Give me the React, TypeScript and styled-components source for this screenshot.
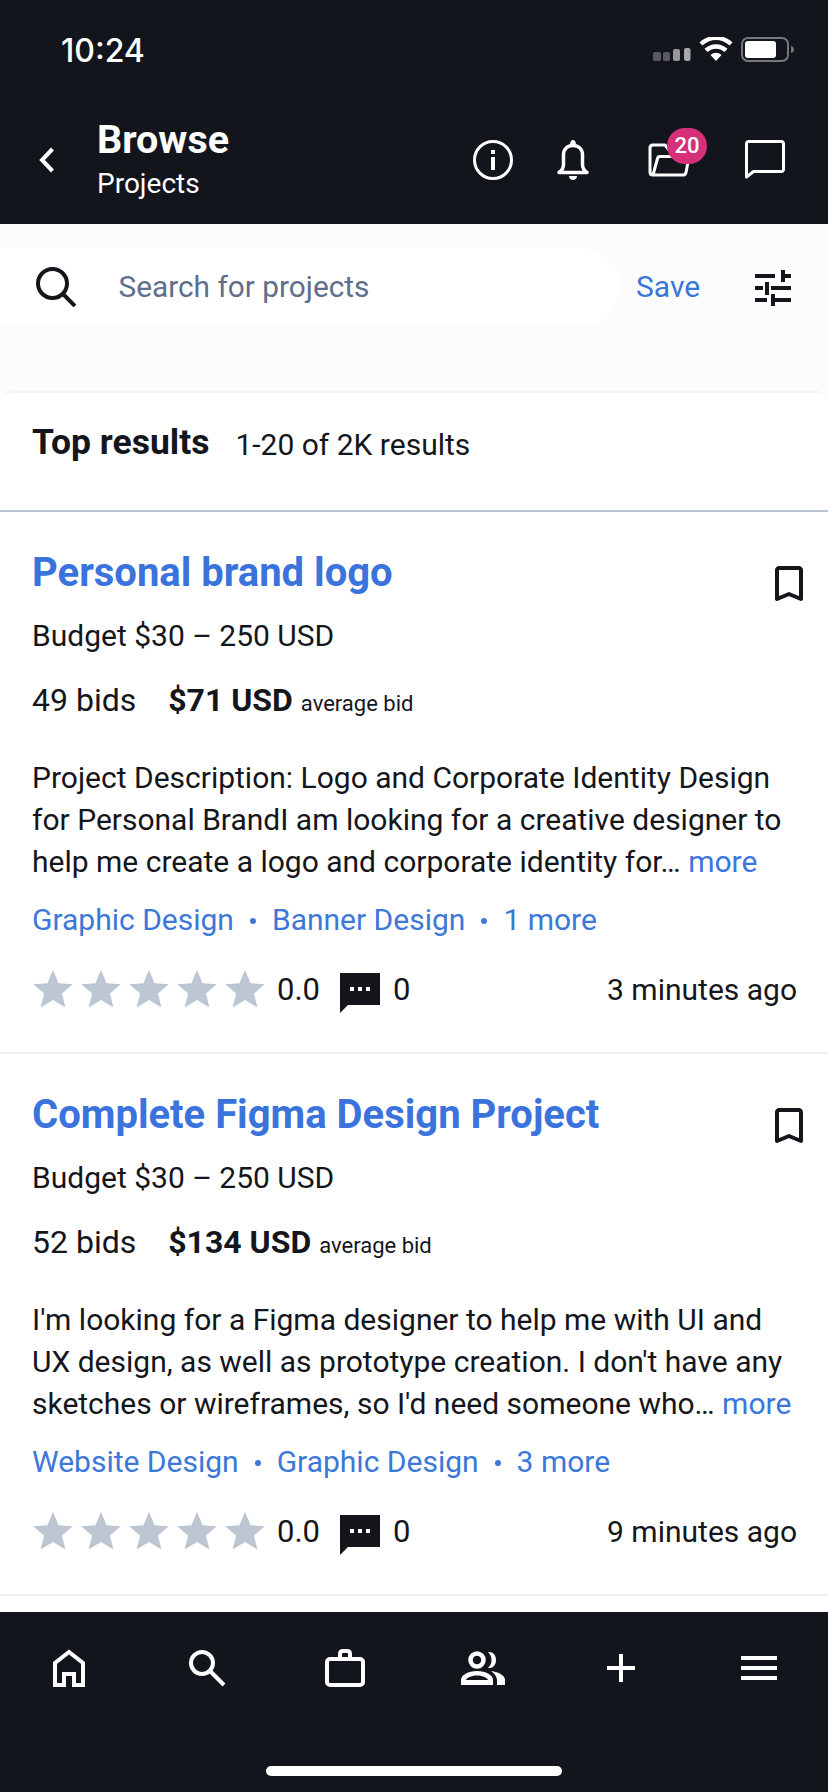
import React from "react";
import styled, { createGlobalStyle } from "styled-components";

const Global = createGlobalStyle`
  html, body { margin: 0; padding: 0; background: #fff; }
  * { box-sizing: border-box; }
  body { font-family: Roboto, "Liberation Sans", sans-serif; color: #14161c; }
`;

const Page = styled.div`
  width: 828px;
  height: 1792px;
  display: flex;
  flex-direction: column;
  overflow: hidden;
  background: #fff;
`;

const Header = styled.header`
  height: 224px;
  flex: none;
  background: #13151d;
  color: #fff;
  display: flex;
  flex-direction: column;
`;

const StatusBar = styled.div`
  height: 100px;
  flex: none;
  display: flex;
  align-items: flex-start;
  justify-content: space-between;
  padding: 32px 32px 0 61px;
`;

const Clock = styled.span`
  font-family: Inter, Roboto, sans-serif;
  font-size: 32px;
  line-height: 38px;
  font-weight: 500;
`;

const StatusIcons = styled.svg`
  display: block;
  width: 146px;
  height: 30px;
  margin-top: 5px;
`;

const NavRow = styled.div`
  display: flex;
  align-items: flex-start;
  padding-left: 38px;
`;

const Back = styled.svg`
  flex: none;
  width: 20px;
  height: 28px;
  margin-top: 46px;
`;

const Titles = styled.div`
  flex: 1;
  margin-left: 39px;
  display: flex;
  flex-direction: column;
`;

const Title = styled.div`
  font-size: 39.5px;
  line-height: 44px;
  font-weight: 700;
  margin-top: 18px;
`;

const Subtitle = styled.div`
  font-size: 28px;
  line-height: 32px;
  margin-top: 6px;
`;

const NavIcons = styled.div`
  display: flex;
  align-items: flex-start;
  padding: 40px 43px 0 0;
`;

const NavIcon = styled.div<{ $gap: number }>`
  position: relative;
  margin-left: ${(p) => p.$gap}px;
  height: 40px;
  svg { display: block; }
`;

const Badge = styled.span`
  position: absolute;
  left: 19px;
  top: -12px;
  width: 40px;
  height: 36px;
  border-radius: 18px;
  background: #d6307a;
  color: #fff;
  font-size: 22px;
  line-height: 36px;
  font-weight: 500;
  text-align: center;
`;

const SearchBar = styled.div`
  height: 167px;
  flex: none;
  background: #fcfcfd;
  padding-top: 24px;
  display: flex;
  align-items: flex-start;
`;

const SearchPill = styled.div`
  width: 620px;
  height: 77px;
  border-radius: 0 38px 38px 0;
  background: #fff;
  display: flex;
  align-items: center;
  padding-left: 36px;
`;

const SearchText = styled.span`
  font-size: 29.8px;
  color: #5e6f8d;
  margin-left: 42.5px;
`;

const SaveLink = styled.span`
  font-size: 30px;
  line-height: 77px;
  color: #3b76dc;
  margin-left: 16px;
`;

const FilterIcon = styled.svg`
  width: 36px;
  height: 36px;
  margin: 22px 0 0 55px;
`;

const Results = styled.main`
  flex: 1;
  min-height: 0;
  overflow: hidden;
  border-radius: 12px 12px 0 0;
  border-top: 2px solid #f3f4f6;
  background: #fff;
`;

const ResultsHead = styled.div`
  height: 119px;
  padding: 27px 32px 0;
  display: flex;
  align-items: flex-start;
  gap: 26px;
  border-bottom: 2px solid #b9c3d2;
`;

const HeadTitle = styled.h2`
  margin: 0;
  font-size: 35.5px;
  line-height: 44px;
  font-weight: 700;
`;

const HeadCount = styled.span`
  font-size: 30px;
  line-height: 44px;
  margin-top: 3px;
`;

const Item = styled.article`
  height: 542px;
  padding: 0 31px 0 32px;
  border-bottom: 2px solid #eff0f2;
`;

const ItemTop = styled.div`
  display: flex;
  justify-content: space-between;
  align-items: flex-start;
  height: 79px;
  padding-top: 38px;
`;

const ItemTitle = styled.h3`
  margin: 0;
  font-size: 40px;
  line-height: 46px;
  font-weight: 700;
  color: #3b73dc;
`;

const Bookmark = styled.svg`
  width: 28px;
  height: 36px;
  margin: 16px -6px 0 0;
`;

const Budget = styled.div`
  font-size: 30px;
  line-height: 40px;
  margin-top: 25px;
`;

const BidRow = styled.div`
  display: flex;
  align-items: baseline;
  font-size: 32px;
  line-height: 40px;
  margin-top: 24px;
`;

const Avg = styled.strong`
  margin-left: 32px;
  font-weight: 700;
  font-size: 32px;
`;

const AvgLabel = styled.span`
  margin-left: 8px;
  font-size: 22px;
`;

const Description = styled.p`
  margin: 33px 0 0;
  font-size: 30px;
  line-height: 42px;
  white-space: nowrap;
`;

const More = styled.span`
  color: #3b76dc;
`;

const Tags = styled.div`
  display: flex;
  align-items: center;
  margin-top: 17px;
  font-size: 30px;
  line-height: 40px;
  color: #3c78d8;
`;

const Dot = styled.i`
  width: 6px;
  height: 6px;
  border-radius: 50%;
  background: #3c78d8;
  margin: 2px 16px 0;
`;

const MetaRow = styled.div`
  display: flex;
  align-items: center;
  margin-top: 28px;
  height: 42px;
  font-size: 30px;
`;

const Stars = styled.div`
  display: flex;
  gap: 8px;
  margin-left: 1px;
  svg { display: block; }
`;

const Score = styled.span`
  margin-left: 12px;
  font-size: 31px;
`;

const Comment = styled.svg`
  width: 40px;
  height: 40px;
  margin: 8px 0 0 20px;
`;

const Count = styled.span`
  margin-left: 13px;
  font-size: 31px;
`;

const Ago = styled.span`
  margin-left: auto;
`;

const Tabs = styled.nav`
  height: 180px;
  flex: none;
  background: #13151d;
  display: flex;
  flex-direction: column;
`;

const TabRow = styled.div`
  display: grid;
  grid-template-columns: repeat(6, 138px);
  height: 154px;
`;

const Tab = styled.div`
  padding-top: 37px;
  display: flex;
  justify-content: center;
  svg { display: block; }
`;

const HomeBar = styled.div`
  width: 296px;
  height: 10px;
  border-radius: 5px;
  background: #fff;
  align-self: center;
`;

const StarIcon = () => (
  <svg width="40" height="40" viewBox="0 0 40 40">
    <path fill="#bcc6d2" d="M20 1l5.600 13.200 14.200 1.100-10.900 9.300 3.500 13.900L20 30.900 7.600 38.500l3.500-13.900L.2 15.300l14.200-1.100z" />
  </svg>
);

type Data = {
  title: string;
  bids: string;
  avg: string;
  lines: string[];
  last: string;
  tags: string[];
  ago: string;
};

const items: Data[] = [
  {
    title: "Personal brand logo",
    bids: "49 bids",
    avg: "$71 USD",
    lines: [
      "Project Description: Logo and Corporate Identity Design",
      "for Personal BrandI am looking for a creative designer to",
    ],
    last: "help me create a logo and corporate identity for… ",
    tags: ["Graphic Design", "Banner Design", "1 more"],
    ago: "3 minutes ago",
  },
  {
    title: "Complete Figma Design Project",
    bids: "52 bids",
    avg: "$134 USD",
    lines: [
      "I'm looking for a Figma designer to help me with UI and",
      "UX design, as well as prototype creation. I don't have any",
    ],
    last: "sketches or wireframes, so I'd need someone who… ",
    tags: ["Website Design", "Graphic Design", "3 more"],
    ago: "9 minutes ago",
  },
];

export default function App() {
  return (
    <Page>
      <Global />
      <Header>
        <StatusBar>
          <Clock>10:24</Clock>
          <StatusIcons viewBox="0 0 146 30">
            <rect x="3" y="15" width="8" height="9" rx="2" fill="#5a5b60" />
            <rect x="13" y="15" width="7" height="9" rx="2" fill="#5a5b60" />
            <rect x="23" y="12" width="7" height="12" rx="2" fill="#96979a" />
            <rect x="34" y="11" width="6.500" height="13" rx="2" fill="#a8a9ac" />
            <g transform="translate(3 0)">
              <path fill="#fff" d="M63 24l-5.500-6a8 8 0 0 1 11 0zM54.500 15l-3-3.200a16.500 16.500 0 0 1 23 0l-3 3.200a12.500 12.500 0 0 0-17 0zM49.500 8.500l-3-3a23.500 23.500 0 0 1 33 0l-3 3a19.500 19.500 0 0 0-27 0z" />
            </g>
            <rect x="92" y="1" width="46" height="23" rx="6" fill="none" stroke="#77787c" strokeWidth="2" />
            <rect x="95" y="4" width="31" height="17" rx="3" fill="#fff" />
            <path d="M141 9c2 .5 3 1.800 3 3.500s-1 3-3 3.500z" fill="#77787c" />
          </StatusIcons>
        </StatusBar>
        <NavRow>
          <Back viewBox="0 0 20 28">
            <path d="M14.500 3L4 14l10.500 11" fill="none" stroke="#fff" strokeWidth="4" />
          </Back>
          <Titles>
            <Title>Browse</Title>
            <Subtitle>Projects</Subtitle>
          </Titles>
          <NavIcons>
            <NavIcon $gap={0}>
              <svg width="40" height="40" viewBox="0 0 40 40">
                <circle cx="20" cy="20" r="18.500" fill="none" stroke="#fff" strokeWidth="3" />
                <rect x="18" y="10" width="4" height="4" fill="#fff" />
                <rect x="18" y="17" width="4" height="13" fill="#fff" />
              </svg>
            </NavIcon>
            <NavIcon $gap={44}>
              <svg width="32" height="40" viewBox="0 0 32 40">
                <path fill="none" stroke="#fff" strokeWidth="3.500" strokeLinejoin="round" d="M2 32.500c3-2 4.500-4 4.500-8V15c0-6 4-9.500 9.500-9.500S25.500 9 25.500 15v9.500c0 4 1.500 6 4.500 8z" />
                <path fill="#fff" d="M13 5c0-3 1-5 3-5s3 2 3 5zM12 36h8c0 2.500-2 4-4 4s-4-1.500-4-4z" />
              </svg>
            </NavIcon>
            <NavIcon $gap={59}>
              <svg width="43" height="40" viewBox="0 0 43 40">
                <path fill="none" stroke="#fff" strokeWidth="3" strokeLinejoin="round" d="M5 35c-2 0-3-1-3-3V8c0-2 1-3 3-3h12l4 5h14c2 0 3 1 3 3v3M5 35h30c1.500 0 2.500-.7 3-2.500l3-16H12c-1.500 0-2.200.7-2.500 2L5 35z" />
              </svg>
              <Badge>20</Badge>
            </NavIcon>
            <NavIcon $gap={54}>
              <svg width="40" height="40" viewBox="0 0 40 40">
                <path fill="none" stroke="#fff" strokeWidth="3" strokeLinejoin="round" d="M1.500 3.500c0-1 1-2 2-2h33c1 0 2 1 2 2v26c0 1-1 2-2 2H8.500l-7 5.500z" />
              </svg>
            </NavIcon>
          </NavIcons>
        </NavRow>
      </Header>
      <SearchBar>
        <SearchPill>
          <svg width="40" height="40" viewBox="0 0 40 40" style={{ flex: "none" }}>
            <circle cx="16.500" cy="16.500" r="14.500" fill="none" stroke="#14161c" strokeWidth="4" />
            <path d="M27 27l12 12" stroke="#14161c" strokeWidth="4" />
          </svg>
          <SearchText>Search for projects</SearchText>
        </SearchPill>
        <SaveLink>Save</SaveLink>
        <FilterIcon viewBox="0 0 36 36">
          <path fill="#14161c" d="M0 4h20v4H0zM28 4h8v4h-8zM26 0h4v12h-4zM0 16h8v4H0zM16 16h20v4H16zM10 12h4v13h-4zM0 28h12v4H0zM20 28h16v4H20zM16 24h4v12h-4z" />
        </FilterIcon>
      </SearchBar>
      <Results>
        <ResultsHead>
          <HeadTitle>Top results</HeadTitle>
          <HeadCount>1-20 of 2K results</HeadCount>
        </ResultsHead>
        {items.map((it) => (
          <Item key={it.title}>
            <ItemTop>
              <ItemTitle>{it.title}</ItemTitle>
              <Bookmark viewBox="0 0 28 36">
                <path fill="none" stroke="#14161c" strokeWidth="4" strokeLinejoin="round" d="M2 33V4c0-1 1-2 2-2h20c1 0 2 1 2 2v29l-12-5z" />
              </Bookmark>
            </ItemTop>
            <Budget>Budget $30 – 250 USD</Budget>
            <BidRow>
              {it.bids}
              <Avg>{it.avg}</Avg>
              <AvgLabel>average bid</AvgLabel>
            </BidRow>
            <Description>
              {it.lines[0]}
              <br />
              {it.lines[1]}
              <br />
              {it.last}
              <More>more</More>
            </Description>
            <Tags>
              {it.tags[0]}
              <Dot />
              {it.tags[1]}
              <Dot />
              {it.tags[2]}
            </Tags>
            <MetaRow>
              <Stars>
                {[0, 1, 2, 3, 4].map((i) => (
                  <StarIcon key={i} />
                ))}
              </Stars>
              <Score>0.0</Score>
              <Comment viewBox="0 0 40 40">
                <path fill="#14161c" d="M0 0h40v32H8l-8 8z" />
                <path fill="#fff" d="M10 14h4v4h-4zM18 14h4v4h-4zM26 14h4v4h-4z" />
              </Comment>
              <Count>0</Count>
              <Ago>{it.ago}</Ago>
            </MetaRow>
          </Item>
        ))}
      </Results>
      <Tabs>
        <TabRow>
          <Tab>
            <svg width="36" height="38" viewBox="0 0 36 38">
              <path fill="none" stroke="#fff" strokeWidth="4" d="M4 36V14L18 3l14 11v22h-9V25H13v11z" />
            </svg>
          </Tab>
          <Tab>
            <svg width="38" height="38" viewBox="0 0 38 38">
              <circle cx="14" cy="14" r="11" fill="none" stroke="#fff" strokeWidth="4" />
              <path d="M22 22l14 14" stroke="#fff" strokeWidth="4" />
            </svg>
          </Tab>
          <Tab>
            <svg width="40" height="38" viewBox="0 0 40 38">
              <rect x="2" y="10" width="36" height="26" rx="3" fill="none" stroke="#fff" strokeWidth="4" />
              <path d="M15 10V5c0-2 1-3 3-3h4c2 0 3 1 3 3v5" fill="none" stroke="#fff" strokeWidth="4" />
            </svg>
          </Tab>
          <Tab>
            <svg width="44" height="38" viewBox="0 0 44 38">
              <circle cx="16" cy="11" r="6.500" fill="none" stroke="#fff" strokeWidth="4.500" />
              <path fill="#fff" d="M27 3c5-.5 8 3 8 8s-3 8.500-8 8c2.500-2.500 3.500-5 3.500-8S29.500 5.500 27 3z" />
              <path fill="#fff" fillRule="evenodd" d="M0 36v-5c0-5 7-9 16-9s16 4 16 9v5zM5 31h22c-.5-2-5-4.500-11-4.500S5.500 29 5 31z" />
              <path fill="#fff" d="M30 22c8 1 14 4.500 14 9v5h-8v-5c0-3-2.500-6.500-6-9z" />
            </svg>
          </Tab>
          <Tab>
            <svg width="28" height="38" viewBox="0 0 28 38">
              <path d="M14 5v28M0 19h28" stroke="#fff" strokeWidth="4" />
            </svg>
          </Tab>
          <Tab>
            <svg width="36" height="38" viewBox="0 0 36 38">
              <path d="M0 9h36M0 19h36M0 29h36" stroke="#fff" strokeWidth="4" />
            </svg>
          </Tab>
        </TabRow>
        <HomeBar />
      </Tabs>
    </Page>
  );
}
